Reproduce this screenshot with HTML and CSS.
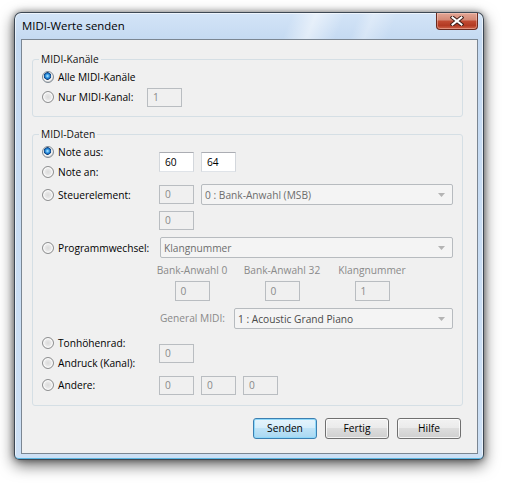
FILE: index.html
```html
<!DOCTYPE html>
<html lang="de">
<head>
<meta charset="utf-8">
<title>MIDI-Werte senden</title>
<link rel="stylesheet" href="styles.css">
</head>
<body>
<div class="desktop">
  <div class="window">
    <div class="titlebar">
      <span class="title">MIDI-Werte senden</span>
      <span class="close">
        <svg width="14" height="10" viewBox="0 0 14 10">
          <path d="M2.5 1.5 L11.5 8.5 M11.5 1.5 L2.5 8.5" stroke="#3b1d17" stroke-width="4" stroke-linecap="square" fill="none"/>
          <path d="M2.5 1.5 L11.5 8.5 M11.5 1.5 L2.5 8.5" stroke="#ffffff" stroke-width="2" stroke-linecap="square" fill="none"/>
        </svg>
      </span>
    </div>
    <div class="client">
      <fieldset class="group g1">
        <legend>MIDI-Kanäle</legend>
        <div class="row">
          <div class="rl"><span class="radio on"></span><span>Alle MIDI-Kanäle</span></div>
        </div>
        <div class="row">
          <div class="labelcol narrow"><div class="rl"><span class="radio"></span><span>Nur MIDI-Kanal:</span></div></div>
          <span class="edit dis h19">1</span>
        </div>
      </fieldset>

      <fieldset class="group g2">
        <legend>MIDI-Daten</legend>
        <div class="row rowa">
          <div class="labelcol">
            <div class="rl"><span class="radio on"></span><span>Note aus:</span></div>
            <div class="rl"><span class="radio"></span><span>Note an:</span></div>
          </div>
          <div class="ctrls">
            <span class="edit">60</span>
            <span class="edit">64</span>
          </div>
        </div>
        <div class="row rowb">
          <div class="labelcol"><div class="rl"><span class="radio"></span><span>Steuerelement:</span></div></div>
          <div class="ctrls">
            <span class="edit dis h19">0</span>
            <span class="combo w252"><span class="ctext">0 : Bank-Anwahl (MSB)</span><svg class="arrow" width="7" height="4" viewBox="0 0 7 4"><path d="M0 0 H7 L3.5 4 Z" fill="#b4b4b4"/></svg></span>
          </div>
        </div>
        <div class="row rowc">
          <div class="ctrls indent"><span class="edit dis h19">0</span></div>
        </div>
        <div class="row rowd">
          <div class="labelcol"><div class="rl"><span class="radio"></span><span>Programmwechsel:</span></div></div>
          <span class="combo w293"><span class="ctext">Klangnummer</span><svg class="arrow" width="7" height="4" viewBox="0 0 7 4"><path d="M0 0 H7 L3.5 4 Z" fill="#b4b4b4"/></svg></span>
        </div>
        <div class="banks">
          <div class="bank"><span class="dlabel">Bank-Anwahl 0</span><span class="edit dis">0</span></div>
          <div class="bank"><span class="dlabel">Bank-Anwahl 32</span><span class="edit dis">0</span></div>
          <div class="bank"><span class="dlabel">Klangnummer</span><span class="edit dis">1</span></div>
        </div>
        <div class="row rowf">
          <span class="dlabel">General MIDI:</span>
          <span class="combo w219"><span class="ctext dark">1 : Acoustic Grand Piano</span><svg class="arrow" width="7" height="4" viewBox="0 0 7 4"><path d="M0 0 H7 L3.5 4 Z" fill="#b4b4b4"/></svg></span>
        </div>
        <div class="row rowg">
          <div class="labelcol">
            <div class="rl"><span class="radio"></span><span>Tonhöhenrad:</span></div>
            <div class="rl"><span class="radio"></span><span>Andruck (Kanal):</span></div>
          </div>
          <span class="edit dis h19">0</span>
        </div>
        <div class="row rowh">
          <div class="labelcol"><div class="rl"><span class="radio"></span><span>Andere:</span></div></div>
          <div class="ctrls">
            <span class="edit dis h19">0</span>
            <span class="edit dis h19">0</span>
            <span class="edit dis h19">0</span>
          </div>
        </div>
      </fieldset>

      <div class="buttons">
        <button class="btn default">Senden</button>
        <button class="btn">Fertig</button>
        <button class="btn">Hilfe</button>
      </div>
    </div>
  </div>
</div>
</body>
</html>
```
FILE: styles.css
```css
html, body {
  margin: 0;
  background: #ffffff;
}
body {
  font-family: "Open Sans", "Noto Sans", sans-serif;
  font-size: 10.2px;
  color: #000000;
  width: 507px;
  height: 486px;
  overflow: hidden;
}
.desktop {
  padding: 12px 0 0 14px;
}
.window {
  width: 470px;
  height: 448px;
  box-sizing: border-box;
  border: 1px solid rgba(35, 45, 55, 0.85);
  border-radius: 7px 7px 5px 5px;
  padding: 0 5px 5px 6px;
  display: flex;
  flex-direction: column;
  background:
    linear-gradient(112deg, rgba(255,255,255,0) 58%, rgba(255,255,255,0.5) 63%, rgba(255,255,255,0) 69%, rgba(255,255,255,0) 72%, rgba(255,255,255,0.3) 75%, rgba(255,255,255,0) 80%) top / 100% 27px no-repeat,
    linear-gradient(#d3e4f7, #c5daf2 26px, #cde0f5 100%);
  box-shadow:
    inset 0 -1px 0 #59b5e2,
    inset 0 0 0 1px rgba(255,255,255,0.6),
    0 5px 15px rgba(0,0,0,0.6),
    0 0 6px rgba(0,0,0,0.4);
}
.titlebar {
  height: 26px;
  flex: none;
  display: flex;
  justify-content: space-between;
  align-items: flex-start;
}
.title {
  font-size: 11.4px;
  line-height: 26px;
  padding-left: 1px;
  color: #000;
}
.close {
  width: 42px;
  height: 17px;
  box-sizing: border-box;
  border: 1px solid #6a2a1f;
  border-top: none;
  border-radius: 0 0 4px 4px;
  background: linear-gradient(#e3a796 0, #d48a77 42%, #c04a32 52%, #b33a23 78%, #cf644a 100%);
  box-shadow: inset 0 0 0 1px rgba(255,220,210,0.4);
  display: flex;
  align-items: center;
  justify-content: center;
}
.close svg {
  display: block;
}
.client {
  flex: 1;
  box-sizing: border-box;
  border: 1px solid #7b8692;
  background: #f0f0f0;
  padding: 0 0 0 10px;
  display: flex;
  flex-direction: column;
}
.group {
  box-sizing: border-box;
  width: 431px;
  margin: 0;
  border: 1px solid #d5dfe5;
  border-radius: 3px;
  padding: 1px 0 9px 9px;
  min-width: 0;
}
.g1 {
  margin-top: 12px;
}
.g2 {
  margin-top: 10px;
  padding-bottom: 10px;
}
.group legend {
  line-height: 14px;
  padding: 0 2px;
  margin-left: -3px;
  color: #111;
}
.row {
  display: flex;
  align-items: center;
  height: 20px;
}
.labelcol {
  width: 117px;
  flex: none;
  display: flex;
  flex-direction: column;
}
.labelcol.narrow {
  width: 105px;
}
.rl {
  display: flex;
  align-items: center;
  height: 20px;
  white-space: nowrap;
}
.radio {
  flex: none;
  width: 12px;
  height: 12px;
  box-sizing: border-box;
  border-radius: 50%;
  border: 1px solid #8e8f90;
  margin-right: 4px;
  background: radial-gradient(circle at 50% 50%, #dadada 0, #e8e8e8 3px, #fbfbfb 4.5px, #d2d2d2 5.5px);
}
.radio.on {
  border-color: #7f8a94;
  background: radial-gradient(circle at 45% 40%, #c5ecff 0, #45aaee 1.5px, #1a6cbc 2.7px, #0c3f7a 3.5px, #e4e4e4 4px, #f8f8f8 4.8px, #d4d4d4 5.5px);
}
.ctrls {
  display: flex;
  align-items: center;
  gap: 7px;
}
.ctrls.indent {
  margin-left: 117px;
}
.edit {
  flex: none;
  box-sizing: border-box;
  width: 35px;
  height: 20px;
  line-height: 18px;
  padding-left: 5px;
  background: #ffffff;
  border: 1px solid;
  border-color: #abadb3 #d3d7dc #dfe3e8 #d3d7dc;
  color: #000;
}
.edit.h19 {
  height: 19px;
  line-height: 17px;
}
.edit.dis {
  background: #f0f0f0;
  border-color: #b9bdc1;
  color: #8a8a8a;
}
.combo {
  flex: none;
  box-sizing: border-box;
  height: 21px;
  display: flex;
  align-items: center;
  background: #f4f4f4;
  border: 1px solid #b7bbbf;
  border-radius: 2px;
  padding-left: 3px;
}
.ctext {
  flex: 1;
  color: #6d6d6d;
  white-space: nowrap;
}
.ctext.dark {
  color: #4a4a4a;
}
.arrow {
  flex: none;
  margin-right: 7px;
  display: block;
}
.w252 { width: 252px; }
.w293 { width: 293px; margin-left: 1px; }
.w219 { width: 219px; }
.rowa {
  height: 40px;
}
.rowb {
  height: 21px;
  margin-top: 2px;
}
.rowc {
  height: 19px;
  margin-top: 6px;
}
.rowd {
  height: 21px;
  margin-top: 7px;
}
.banks {
  display: grid;
  grid-template-columns: 90px 90px 90px;
  margin-left: 105px;
  margin-top: 5px;
}
.bank {
  display: flex;
  flex-direction: column;
  align-items: center;
  gap: 3px;
}
.dlabel {
  color: #8a8a8a;
  line-height: 15px;
  white-space: nowrap;
}
.rowf {
  height: 21px;
  margin-top: 7px;
  margin-left: 117px;
  width: 294px;
  justify-content: flex-end;
  gap: 9px;
}
.rowg {
  height: 40px;
  margin-top: 4px;
}
.rowh {
  height: 20px;
  margin-top: 2px;
}
.buttons {
  display: flex;
  justify-content: flex-end;
  gap: 8px;
  padding-right: 16px;
  margin-top: 12px;
}
.btn {
  width: 64px;
  height: 21px;
  box-sizing: border-box;
  padding: 0;
  margin: 0;
  font: inherit;
  color: #000;
  line-height: 19px;
  text-align: center;
  border: 1px solid #707070;
  border-radius: 3px;
  background: linear-gradient(#f2f2f2 0, #ebebeb 45%, #dddddd 50%, #cfcfcf 100%);
  box-shadow: inset 0 0 0 1px rgba(255,255,255,0.75);
}
.btn.default {
  border-color: #3c7fb1;
  background: linear-gradient(#e5f4fc 0, #d6eefb 45%, #bfe3f7 50%, #a9d8f2 100%);
  box-shadow: inset 0 0 0 1px #8fd9fa;
}
```
